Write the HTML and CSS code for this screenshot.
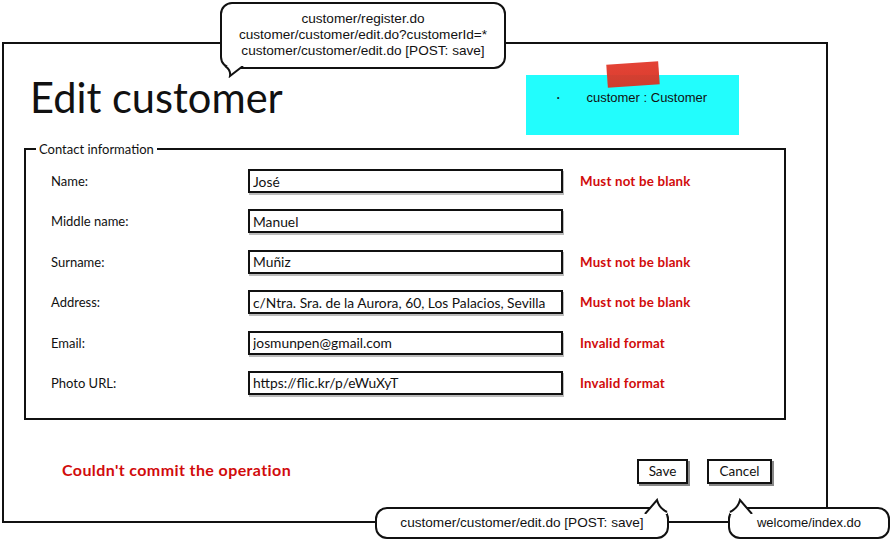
FILE: index.html
```html
<!DOCTYPE html>
<html lang="en">
<head>
    <meta charset="UTF-8">
    <meta name="viewport" content="width=device-width, initial-scale=1.0">
    <title>Edit customer</title>
    <link rel="stylesheet" href="styles.css">
</head>
<body>
    <div class="page">
        <div class="frame">
            <div class="header">
                <h1>Edit customer</h1>
                <div class="sticky">
                    <span class="tape"></span>
                    <span class="dot">&bull;</span>
                    <span>customer : Customer</span>
                </div>
            </div>

            <fieldset class="contact">
                <legend>Contact information</legend>
                <div class="form-grid">
                    <label for="name">Name:</label>
                    <input type="text" id="name" value="José">
                    <span class="error">Must not be blank</span>

                    <label for="middle">Middle name:</label>
                    <input type="text" id="middle" value="Manuel">
                    <span class="error"></span>

                    <label for="surname">Surname:</label>
                    <input type="text" id="surname" value="Muñiz">
                    <span class="error">Must not be blank</span>

                    <label for="address">Address:</label>
                    <input type="text" id="address" value="c/Ntra. Sra. de la Aurora, 60, Los Palacios, Sevilla">
                    <span class="error">Must not be blank</span>

                    <label for="email">Email:</label>
                    <input type="text" id="email" value="josmunpen@gmail.com">
                    <span class="error">Invalid format</span>

                    <label for="photo">Photo URL:</label>
                    <input type="text" id="photo" value="https://flic.kr/p/eWuXyT">
                    <span class="error">Invalid format</span>
                </div>
            </fieldset>

            <div class="footer">
                <span class="commit-error">Couldn't commit the operation</span>
                <div class="buttons">
                    <button class="btn-save">Save</button>
                    <button class="btn-cancel">Cancel</button>
                </div>
            </div>
        </div>

        <!-- callouts with the URLs -->
        <div class="bubble bubble-top">
            customer/register.do<br>
            customer/customer/edit.do?customerId=*<br>
            customer/customer/edit.do [POST: save]
            <svg class="tail tail-down" width="24" height="12" viewBox="0 0 24 12">
                <path d="M1 0 Q7 4 6 10 L19 0 Z" fill="#fff"/>
                <path d="M1 0 Q7 4 6 10 L19 0" fill="none" stroke="#111" stroke-width="2"/>
            </svg>
        </div>
        <div class="bubble bubble-save">
            customer/customer/edit.do [POST: save]
            <svg class="tail tail-save" width="26" height="16" viewBox="0 0 26 16">
                <path d="M2 16 L14 2 Q16 10 24 14 L24 16 Z" fill="#fff"/>
                <path d="M2 16 L14 2 Q16 10 24 14" fill="none" stroke="#111" stroke-width="2"/>
            </svg>
        </div>
        <div class="bubble bubble-welcome">
            welcome/index.do
            <svg class="tail tail-welcome" width="26" height="16" viewBox="0 0 26 16">
                <path d="M24 16 L12 2 Q10 10 2 14 L2 16 Z" fill="#fff"/>
                <path d="M24 16 L12 2 Q10 10 2 14" fill="none" stroke="#111" stroke-width="2"/>
            </svg>
        </div>
    </div>
</body>
</html>
```

FILE: styles.css
```css
body {
    margin: 0;
    background: #fff;
    color: #111;
    font-family: 'Lato', 'Noto Sans', sans-serif;
}
.page {
    position: relative;
    width: 893px;
    height: 540px;
    overflow: hidden;
}
.frame {
    box-sizing: border-box;
    margin: 42px 0 0 2px;
    width: 826px;
    height: 481px;
    border: 2px solid #111;
    display: flex;
    flex-direction: column;
}
.header {
    display: flex;
    justify-content: space-between;
    align-items: flex-start;
    height: 97px;
}
h1 {
    margin: 29px 0 0 26px;
    font-size: 41.6px;
    font-weight: 400;
    line-height: 48px;
}
.sticky {
    position: relative;
    margin: 31px 87px 0 0;
    width: 213px;
    height: 60px;
    background: #22fdfd;
    font-family: 'Liberation Sans', Arial, sans-serif;
    font-size: 13px;
    display: flex;
    align-items: center;
    padding-bottom: 16px;
    box-sizing: border-box;
}
.sticky .dot {
    margin: 0 27px 0 31px;
    font-size: 7px;
}
.tape {
    position: absolute;
    left: 81px;
    top: -12px;
    width: 52px;
    height: 23px;
    background: linear-gradient(#e2392b, #d83323);
    transform: rotate(-4deg);
    opacity: 0.95;
}
.contact {
    margin: 0 0 0 20px;
    width: 762px;
    box-sizing: border-box;
    border: 2px solid #111;
    padding: 12px 0 23px 10px;
}
.contact legend {
    font-size: 13px;
    padding: 0 3px;
}
.form-grid {
    display: grid;
    grid-template-columns: 197px 315px auto;
    grid-auto-rows: 24px;
    row-gap: 16.4px;
    align-items: center;
    padding-left: 15px;
    font-size: 13px;
}
.form-grid input {
    box-sizing: border-box;
    height: 24px;
    width: 315px;
    border: 2px solid #111;
    box-shadow: 1px 2px 0 #bbb;
    padding: 0 3px;
    font-family: inherit;
    font-size: 13.8px;
    color: #111;
    outline: none;
}
.error {
    margin-left: 17px;
    color: #d10b0b;
    font-weight: 700;
    font-size: 13.3px;
    letter-spacing: 0.2px;
}
.footer {
    display: flex;
    justify-content: space-between;
    align-items: center;
    margin-top: 39px;
    padding: 0 54px 0 58px;
}
.commit-error {
    color: #d10b0b;
    font-weight: 700;
    font-size: 16px;
    letter-spacing: 0.4px;
    margin-bottom: 4px;
}
.buttons {
    display: flex;
    gap: 19px;
}
.buttons button {
    box-sizing: border-box;
    height: 25px;
    padding: 0 6px;
    border: 2px solid #111;
    background: #fff;
    box-shadow: 2px 2px 0 #888;
    font-family: inherit;
    font-size: 13.5px;
    color: #111;
}
.btn-save {
    width: 51px;
}
.btn-cancel {
    width: 65px;
}
.bubble {
    position: absolute;
    box-sizing: border-box;
    border: 2px solid #111;
    border-radius: 12px;
    background: #fff;
    font-family: 'Liberation Sans', Arial, sans-serif;
    font-size: 13.6px;
    line-height: 16px;
    text-align: center;
    color: #111;
}
.bubble-top {
    left: 220px;
    top: 2px;
    width: 286px;
    height: 67px;
    padding-top: 7px;
}
.bubble-save {
    left: 375px;
    top: 507px;
    width: 294px;
    height: 32px;
    padding-top: 6px;
}
.bubble-welcome {
    left: 728px;
    top: 507px;
    width: 162px;
    height: 32px;
    padding-top: 6px;
    font-size: 13px;
}
.tail {
    position: absolute;
}
.tail-down {
    left: 2px;
    bottom: -11px;
}
.tail-save {
    right: -2px;
    top: -11px;
}
.tail-welcome {
    left: -2px;
    top: -11px;
}
```
